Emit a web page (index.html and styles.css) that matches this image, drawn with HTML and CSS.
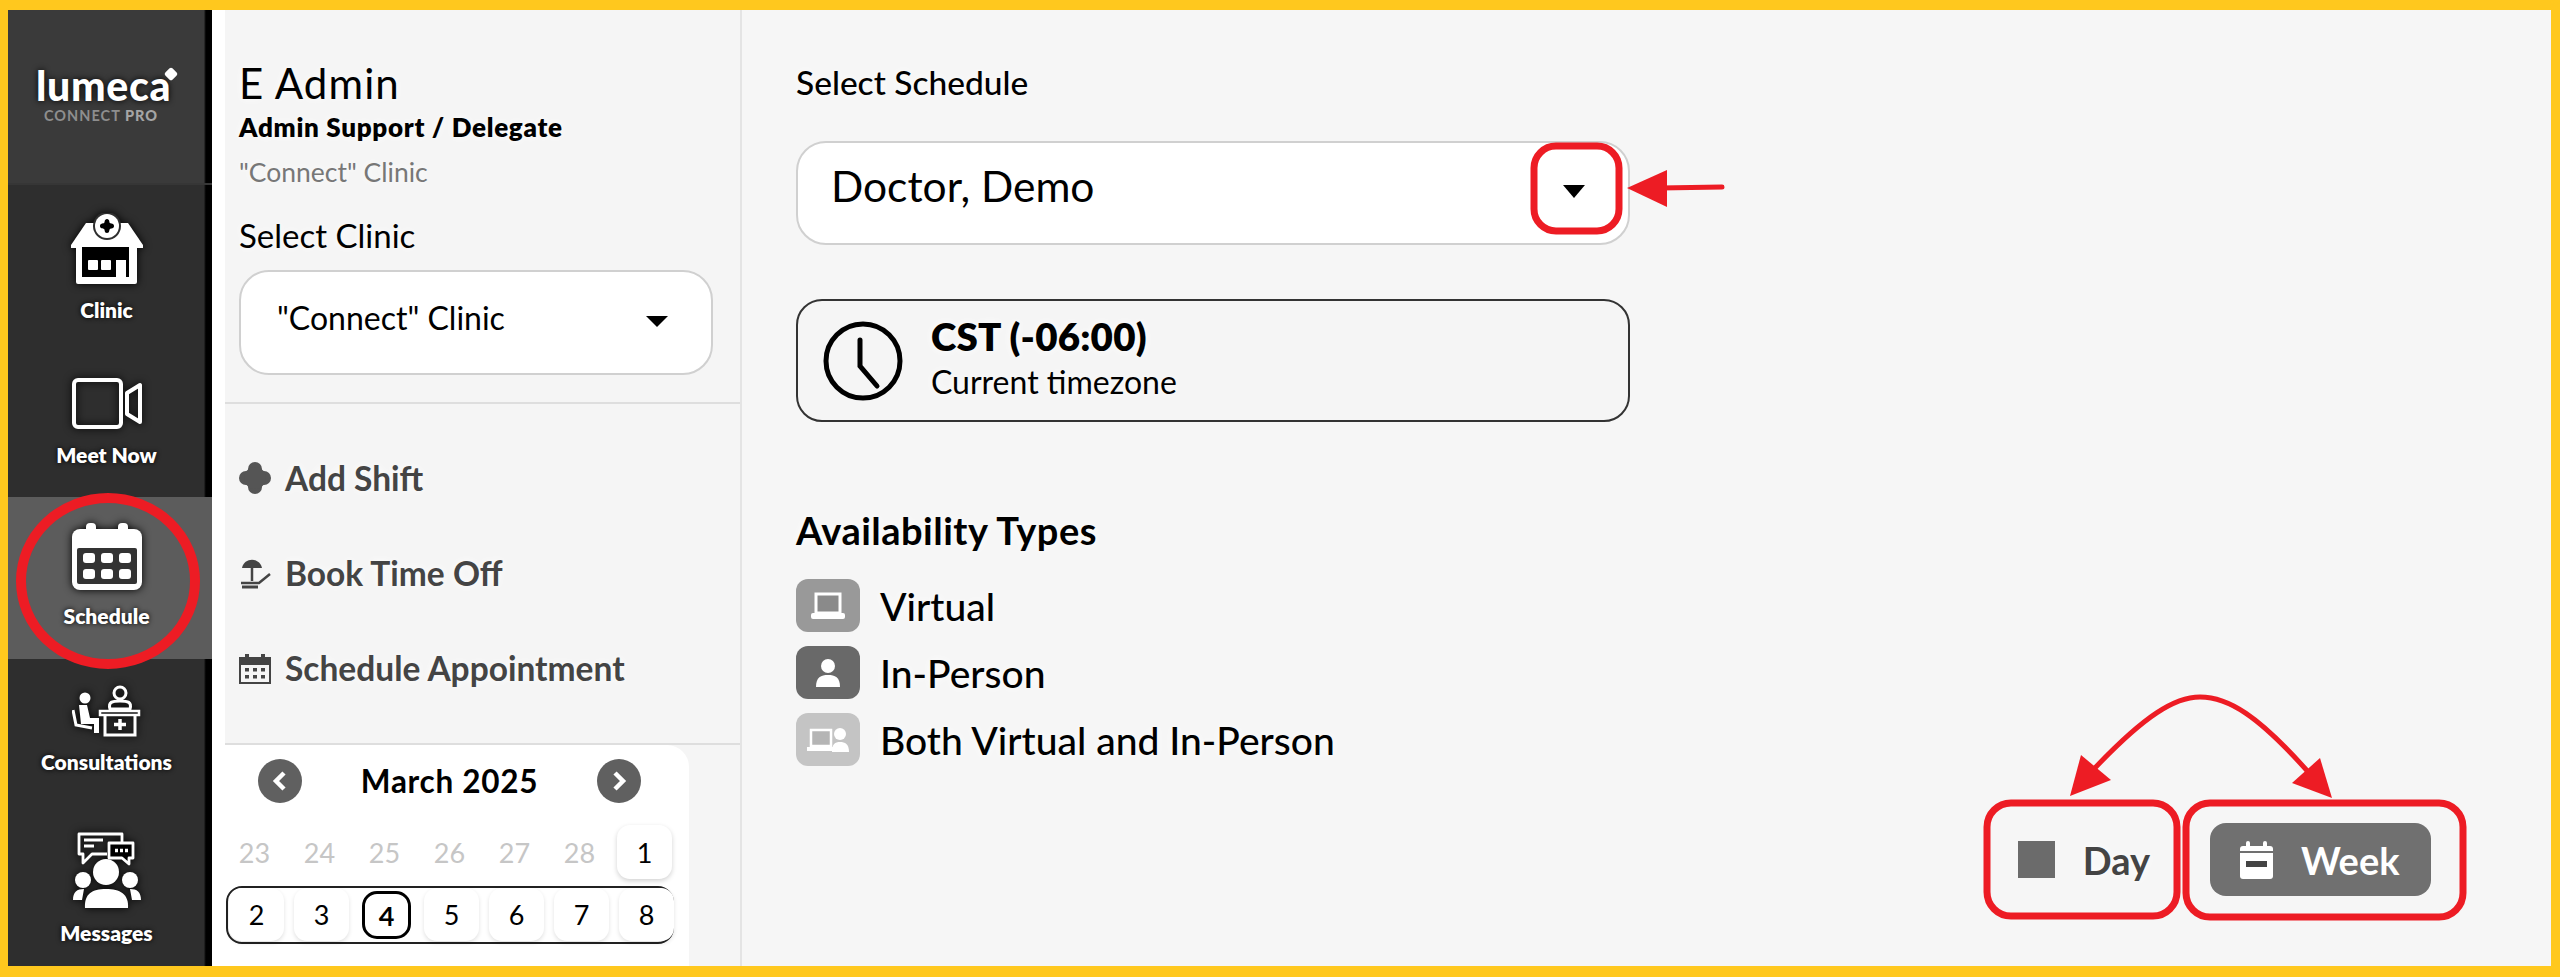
FILE: index.html
```html
<!DOCTYPE html>
<html lang="en">
<head>
<meta charset="UTF-8">
<meta name="viewport" content="width=device-width, initial-scale=1.0">
<title>Lumeca Connect Pro - Schedule</title>
<link rel="stylesheet" href="styles.css">
</head>
<body>

<div class="page">
    <div class="frame">

        <!-- Main navigation -->
        <aside class="sidebar">
            <div class="logo">
                <div class="logo-name">lumeca<span class="logo-star"></span></div>
                <div class="logo-sub">CONNECT <b>PRO</b></div>
            </div>
            <nav class="nav">
                <a class="nav-item nav-clinic">
                    <svg class="nav-icon" width="72" height="71" viewBox="-1 0 72 71">
                        <path d="M-1 32 L14 10 L56 10 L71 32 L71 35 L-1 35 Z" fill="#fff"/>
                        <circle cx="35" cy="13" r="14" fill="#2e2e2e"/>
                        <circle cx="35" cy="13" r="12" fill="#fff"/>
                        <path d="M35 6 C38 6 37 10 38 10 C39 11 42 10 42 13 C42 16 39 15 38 16 C37 16 38 20 35 20 C32 20 33 16 32 16 C31 15 28 16 28 13 C28 10 31 11 32 10 C33 10 32 6 35 6 Z" fill="#000"/>
                        <rect x="4" y="33" width="61" height="38" rx="2" fill="#fff"/>
                        <rect x="10" y="34" width="47" height="30" fill="#000"/>
                        <rect x="16" y="47" width="10" height="10" rx="1" fill="#fff"/>
                        <rect x="29" y="47" width="10" height="10" rx="1" fill="#fff"/>
                        <rect x="44" y="47" width="10" height="17" fill="#fff"/>
                    </svg>
                    <span>Clinic</span>
                </a>
                <a class="nav-item nav-meet">
                    <svg class="nav-icon" width="70" height="51" viewBox="0 0 70 51">
                        <rect x="2" y="2" width="47" height="47" rx="4" fill="none" stroke="#fff" stroke-width="4"/>
                        <path d="M68 7 V44 L55 36 V15 Z" fill="none" stroke="#fff" stroke-width="4" stroke-linejoin="round"/>
                    </svg>
                    <span>Meet Now</span>
                </a>
                <a class="nav-item nav-schedule active">
                    <svg class="nav-icon" width="70" height="67" viewBox="0 0 70 67">
                        <rect x="0" y="6" width="70" height="61" rx="8" fill="#fff"/>
                        <rect x="14" y="0" width="10" height="14" rx="4" fill="#fff"/>
                        <rect x="46" y="0" width="10" height="14" rx="4" fill="#fff"/>
                        <rect x="5" y="25" width="60" height="36" rx="2" fill="#333"/>
                        <g fill="#fff">
                            <rect x="11" y="30" width="12" height="10" rx="3"/>
                            <rect x="29" y="30" width="12" height="10" rx="3"/>
                            <rect x="47" y="30" width="12" height="10" rx="3"/>
                            <rect x="11" y="46" width="12" height="10" rx="3"/>
                            <rect x="29" y="46" width="12" height="10" rx="3"/>
                            <rect x="47" y="46" width="12" height="10" rx="3"/>
                        </g>
                    </svg>
                    <span>Schedule</span>
                </a>
                <a class="nav-item nav-consult">
                    <svg class="nav-icon" width="70" height="52" viewBox="0 0 70 52">
                        <circle cx="13" cy="13" r="5.5" fill="#fff"/>
                        <path d="M7 20 H15 L18 33 H27 V48 H22 V39 H9 Z" fill="#fff"/>
                        <path d="M1 25 L4 40 L20 43" fill="none" stroke="#fff" stroke-width="3"/>
                        <circle cx="48" cy="8" r="6" fill="none" stroke="#fff" stroke-width="3"/>
                        <path d="M38 24 C36 17 40 16 48 16 C56 16 60 17 58 24 Z" fill="none" stroke="#fff" stroke-width="3"/>
                        <path d="M28 26 H67 V30 H28 Z" fill="none" stroke="#fff" stroke-width="2.5"/>
                        <path d="M33 30 V50 H63 V30" fill="none" stroke="#fff" stroke-width="3"/>
                        <path d="M48 34 V45 M42 39.5 H54" stroke="#fff" stroke-width="3.5"/>
                    </svg>
                    <span>Consultations</span>
                </a>
                <a class="nav-item nav-messages">
                    <svg class="nav-icon" width="70" height="76" viewBox="0 0 70 76">
                        <path d="M35 22 H20 L11 31 V22 H7 V2 H50 V10" fill="none" stroke="#fff" stroke-width="2.8" stroke-linejoin="round"/>
                        <path d="M12 8 H31 M12 14 H22" stroke="#fff" stroke-width="3"/>
                        <path d="M37 11 H61 V26 H57 V32 L50 26 H37 Z" fill="#000" stroke="#fff" stroke-width="2.8" stroke-linejoin="round"/>
                        <path d="M43 18.5 H56" stroke="#fff" stroke-width="3.5" stroke-dasharray="3 2"/>
                        <circle cx="34" cy="40" r="13" fill="#fff"/>
                        <circle cx="11" cy="48" r="8" fill="#fff"/>
                        <circle cx="58" cy="48" r="8" fill="#fff"/>
                        <path d="M13 76 C12 62 20 57 34 57 C48 57 57 62 56 76 Z" fill="#fff"/>
                        <path d="M1 68 C1 60 5 57 12 57 L10 68 Z M69 68 C69 60 65 57 58 57 L60 68 Z" fill="#fff"/>
                    </svg>
                    <span>Messages</span>
                </a>
            </nav>
        </aside>

        <!-- Clinic panel -->
        <section class="panel">
            <div class="panel-user">
                <h1 class="user-name">E Admin</h1>
                <div class="user-role">Admin Support / Delegate</div>
                <div class="user-clinic">"Connect" Clinic</div>
                <div class="clinic-label">Select Clinic</div>
                <div class="select select-clinic">
                    <span>"Connect" Clinic</span>
                    <span class="caret"></span>
                </div>
            </div>

            <div class="panel-actions">
                <a class="action">
                    <svg width="32" height="32" viewBox="0 0 32 32" fill="#555">
                        <rect x="9" y="0" width="14" height="32" rx="7"/>
                        <rect x="0" y="9" width="32" height="14" rx="7"/>
                        <circle cx="16" cy="16" r="11"/>
                    </svg>
                    <span>Add Shift</span>
                </a>
                <a class="action">
                    <svg width="32" height="32" viewBox="0 0 32 32" fill="none" stroke="#444">
                        <path d="M3 11 C5 0 21 0 23 11 Z" fill="#444" stroke="none"/>
                        <path d="M13 8 V24" stroke-width="2.5"/>
                        <path d="M2 26 H20 L31 17" stroke-width="2.5"/>
                        <path d="M3 30 H19" stroke-width="3"/>
                    </svg>
                    <span>Book Time Off</span>
                </a>
                <a class="action">
                    <svg width="32" height="31" viewBox="0 0 32 31">
                        <path d="M1 5 H31 V30 H1 Z" fill="#f5f5f5" stroke="#444" stroke-width="2"/>
                        <rect x="1" y="4" width="30" height="8" fill="#444"/>
                        <rect x="6" y="1" width="4" height="6" fill="#444"/>
                        <rect x="22" y="1" width="4" height="6" fill="#444"/>
                        <g fill="#444">
                            <rect x="6" y="15" width="4" height="3.5"/>
                            <rect x="14" y="15" width="4" height="3.5"/>
                            <rect x="22" y="15" width="4" height="3.5"/>
                            <rect x="6" y="22" width="4" height="3.5"/>
                            <rect x="14" y="22" width="4" height="3.5"/>
                            <rect x="22" y="22" width="4" height="3.5"/>
                        </g>
                    </svg>
                    <span>Schedule Appointment</span>
                </a>
            </div>

            <!-- Month calendar -->
            <div class="calendar">
                <div class="cal-head">
                    <span class="cal-btn">
                        <svg width="16" height="22" viewBox="0 0 16 22"><path d="M12 3 L4 11 L12 19" fill="none" stroke="#fff" stroke-width="4.5"/></svg>
                    </span>
                    <span class="cal-title">March 2025</span>
                    <span class="cal-btn">
                        <svg width="16" height="22" viewBox="0 0 16 22"><path d="M4 3 L12 11 L4 19" fill="none" stroke="#fff" stroke-width="4.5"/></svg>
                    </span>
                </div>
                <div class="cal-row">
                    <span class="day muted">23</span>
                    <span class="day muted">24</span>
                    <span class="day muted">25</span>
                    <span class="day muted">26</span>
                    <span class="day muted">27</span>
                    <span class="day muted">28</span>
                    <span class="day raised">1</span>
                </div>
                <div class="cal-row cal-week">
                    <span class="day raised">2</span>
                    <span class="day raised">3</span>
                    <span class="day today">4</span>
                    <span class="day raised">5</span>
                    <span class="day raised">6</span>
                    <span class="day raised">7</span>
                    <span class="day raised">8</span>
                </div>
            </div>
        </section>

        <!-- Schedule settings -->
        <main class="main">
            <div class="schedule-label">Select Schedule</div>
            <div class="select select-schedule">
                <span>Doctor, Demo</span>
                <span class="caret"></span>
            </div>

            <div class="timezone">
                <svg width="80" height="80" viewBox="0 0 80 80" fill="none" stroke="#000" stroke-width="5">
                    <circle cx="40" cy="40" r="37"/>
                    <path d="M37 19 V45 L54 65" stroke-linecap="round"/>
                </svg>
                <div>
                    <div class="tz-name">CST (-06:00)</div>
                    <div class="tz-sub">Current timezone</div>
                </div>
            </div>

            <h2 class="types-title">Availability Types</h2>
            <ul class="types">
                <li class="type">
                    <span class="type-icon type-virtual">
                        <svg width="36" height="28" viewBox="0 0 36 28">
                            <rect x="6" y="2" width="24" height="19" fill="#8a8a8a" stroke="#fff" stroke-width="3"/>
                            <rect x="1" y="21" width="34" height="6" rx="2" fill="#fff"/>
                        </svg>
                    </span>
                    Virtual
                </li>
                <li class="type">
                    <span class="type-icon type-person">
                        <svg width="26" height="30" viewBox="0 0 26 30" fill="#fff">
                            <circle cx="13" cy="8" r="7"/>
                            <path d="M1 29 C1 19 6 17 13 17 C20 17 25 19 25 29 Z"/>
                        </svg>
                    </span>
                    In-Person
                </li>
                <li class="type">
                    <span class="type-icon type-both">
                        <svg width="42" height="28" viewBox="0 0 42 28" fill="#fff">
                            <rect x="4" y="4" width="20" height="16" fill="#b5b5b5" stroke="#fff" stroke-width="2.5"/>
                            <rect x="0" y="21" width="27" height="4"/>
                            <circle cx="33" cy="8" r="6"/>
                            <path d="M25 26 C25 18 28 16 33 16 C38 16 42 18 42 26 Z"/>
                        </svg>
                    </span>
                    Both Virtual and In-Person
                </li>
            </ul>

            <div class="view-toggle">
                <a class="view-btn">
                    <span class="view-square"></span>
                    Day
                </a>
                <a class="view-btn view-active">
                    <svg width="33" height="38" viewBox="0 0 33 38">
                        <path d="M3 5 H30 A3 3 0 0 1 33 8 V35 A3 3 0 0 1 30 38 H3 A3 3 0 0 1 0 35 V8 A3 3 0 0 1 3 5 Z" fill="#fff"/>
                        <rect x="6" y="0" width="4" height="8" rx="2" fill="#fff"/>
                        <rect x="23" y="0" width="4" height="8" rx="2" fill="#fff"/>
                        <rect x="0" y="10" width="33" height="2" fill="#707070"/>
                        <rect x="6" y="20" width="21" height="6" fill="#444"/>
                    </svg>
                    Week
                </a>
            </div>
        </main>
    </div>

    <!-- Red annotations drawn over the screenshot -->
    <svg class="marks" width="2560" height="977" viewBox="0 0 2560 977" fill="none" stroke="#ed1c24">
        <ellipse cx="108" cy="581" rx="87" ry="83" stroke-width="10"/>
        <rect x="1534" y="146" width="85" height="85" rx="22" stroke-width="7"/>
        <path d="M1660 188 L1722 187" stroke-width="5" stroke-linecap="round"/>
        <path d="M1627 188 L1667 170 L1667 207 Z" fill="#ed1c24" stroke="none"/>
        <rect x="1987" y="803" width="190" height="113" rx="24" stroke-width="7"/>
        <rect x="2186" y="803" width="277" height="114" rx="24" stroke-width="7"/>
        <path d="M2093 770 C2145 715 2175 697 2200 697 C2228 697 2258 715 2310 774" stroke-width="5"/>
        <path d="M2070 796 L2081 755 L2111 780 Z" fill="#ed1c24" stroke="none"/>
        <path d="M2332 798 L2320 758 L2292 783 Z" fill="#ed1c24" stroke="none"/>
    </svg>
</div>

</body>
</html>
```

FILE: styles.css
```css
* {
    box-sizing: border-box;
}

body {
    margin: 0;
    padding: 0;
    font-family: "Lato", "Noto Sans", sans-serif;
    color: #000;
    background-color: #f6f6f6;
}

.page {
    position: relative;
    width: 2560px;
    height: 977px;
    overflow: hidden;
}

.frame {
    display: flex;
    height: 977px;
    border-style: solid;
    border-color: #ffc81e;
    border-width: 10px 9px 11px 8px;
    background-color: #f6f6f6;
}

.marks {
    position: absolute;
    left: 0;
    top: 0;
    pointer-events: none;
}

/* Sidebar */
.sidebar {
    width: 204px;
    flex-shrink: 0;
    background: linear-gradient(to right, #2e2e2e 96%, #000 97%);
    color: #fff;
    display: flex;
    flex-direction: column;
}

.logo {
    height: 175px;
    padding: 56px 0 0 28px;
    background: linear-gradient(to right, #3a3a3a 96%, #000 97%);
    border-bottom: 2px solid #363636;
}

.logo-name {
    font-size: 41px;
    line-height: 40px;
    font-weight: 900;
    letter-spacing: 0.7px;
    text-shadow: 0 0 6px #000;
    position: relative;
    width: 140px;
}

.logo-star {
    position: absolute;
    right: 0;
    top: 3px;
    width: 10px;
    height: 10px;
    background-color: #fff;
    transform: rotate(45deg);
    border-radius: 2px;
}

.logo-sub {
    margin: 1px 0 0 8px;
    font-size: 14.5px;
    line-height: 18px;
    letter-spacing: 1px;
    font-weight: 700;
    color: #8e8e8e;
    white-space: nowrap;
}

.logo-sub b {
    color: #a5a5a5;
    font-weight: 900;
}

.nav {
    display: flex;
    flex-direction: column;
}

.nav-item {
    display: flex;
    flex-direction: column;
    align-items: center;
    width: 197px;
    font-size: 21px;
    line-height: 26px;
    font-weight: 800;
    text-shadow: 0 0 5px #000;
}

.nav-icon {
    flex-shrink: 0;
    filter: drop-shadow(0 0 4px #000);
}

.nav-item span {
    margin-top: 13px;
}

.nav-clinic {
    height: 160px;
    padding-top: 28px;
}

.nav-meet {
    height: 152px;
    padding-top: 33px;
}

.nav-schedule {
    height: 162px;
    padding-top: 26px;
}

.nav-consult {
    height: 141px;
    padding-top: 26px;
}

.nav-messages {
    height: 166px;
    padding-top: 32px;
}

.nav-item.active {
    width: 204px;
    padding-right: 7px;
    background-color: #5c5c5c;
}

.nav-consult span {
    margin-top: 12px;
}

.nav-messages span {
    margin-top: 12px;
}

/* Clinic panel */
.panel {
    width: 530px;
    flex-shrink: 0;
    border-right: 2px solid #e4e4e4;
    border-left: 13px solid #fff;
    background-color: #f5f5f5;
    display: flex;
    flex-direction: column;
}

.panel-user {
    height: 394px;
    padding: 50px 0 0 14px;
    border-bottom: 2px solid #dedede;
}

.user-name {
    margin: 0;
    font-size: 42px;
    line-height: 46px;
    font-weight: 400;
    letter-spacing: 1.1px;
    text-shadow: 0 0 8px #fff;
}

.user-role {
    margin-top: 6px;
    font-size: 26px;
    line-height: 30px;
    font-weight: 800;
    letter-spacing: 0.7px;
    white-space: nowrap;
    text-shadow: 0 0 8px #fff;
}

.user-clinic {
    margin-top: 15px;
    font-size: 26.5px;
    line-height: 30px;
    color: #777;
    text-shadow: 0 0 8px #fff;
}

.clinic-label {
    margin-top: 29px;
    font-size: 33px;
    line-height: 38px;
    text-shadow: 0 0 8px #fff;
}

.select {
    display: flex;
    align-items: flex-start;
    justify-content: space-between;
    background-color: #fff;
    border: 2px solid #d0d0d0;
    border-radius: 30px;
}

.caret {
    width: 0;
    height: 0;
    border-left: 11px solid transparent;
    border-right: 11px solid transparent;
    border-top: 11px solid #000;
}

.select-clinic {
    width: 474px;
    height: 105px;
    margin-top: 16px;
    padding: 26px 43px 0 36px;
    font-size: 32px;
    line-height: 40px;
}

.select-clinic .caret {
    margin-top: 18px;
}

.panel-actions {
    height: 341px;
    padding: 58px 0 0 14px;
    border-bottom: 2px solid #dedede;
    display: flex;
    flex-direction: column;
}

.action {
    display: flex;
    align-items: center;
    gap: 14px;
    height: 32px;
    margin-bottom: 63px;
    font-size: 33.5px;
    font-weight: 700;
    color: #444;
    text-shadow: 0 0 8px #fff;
}

.calendar {
    flex: 1;
    width: 464px;
    background-color: #fff;
    border-top-right-radius: 22px;
    padding: 12px 0 0 0;
}

.cal-head {
    display: flex;
    align-items: center;
    padding-left: 33px;
    height: 48px;
}

.cal-btn {
    width: 44px;
    height: 44px;
    border-radius: 50%;
    background-color: #606060;
    display: flex;
    align-items: center;
    justify-content: center;
    flex-shrink: 0;
}

.cal-title {
    width: 295px;
    text-align: center;
    font-size: 31.5px;
    font-weight: 700;
    letter-spacing: 0.7px;
}

.cal-row {
    display: grid;
    grid-template-columns: repeat(7, 55px);
    column-gap: 10px;
    padding-left: 2px;
    margin-top: 20px;
    height: 54px;
}

.day {
    display: flex;
    align-items: center;
    justify-content: center;
    height: 54px;
    font-size: 27px;
    border-radius: 13px;
}

.day.muted {
    color: #c6c6c6;
}

.day.raised {
    background-color: #fff;
    box-shadow: 0 2px 5px rgba(0, 0, 0, 0.18);
}

.day.today {
    width: 49px;
    height: 48px;
    margin: 3px 0 0 3px;
    font-weight: 700;
    border: 3px solid #000;
    border-radius: 15px;
}

.cal-week {
    width: 448px;
    height: 58px;
    margin-top: 7px;
    margin-left: 1px;
    padding-left: 1px;
    border: 2px solid #222;
    border-radius: 16px;
}

.cal-week .day.raised {
    height: 53px;
    box-shadow: 0 2px 4px rgba(0, 0, 0, 0.12);
}

/* Main column */
.main {
    flex: 1;
    display: flex;
    flex-direction: column;
    padding: 53px 120px 70px 54px;
}

.schedule-label {
    font-size: 33.5px;
    line-height: 38px;
    font-weight: 500;
    white-space: nowrap;
    text-shadow: 0 0 8px #fff;
}

.select-schedule {
    width: 834px;
    height: 104px;
    margin-top: 40px;
    padding: 18px 43px 0 33px;
    font-size: 42.5px;
    line-height: 50px;
}

.select-schedule .caret {
    margin-top: 24px;
    border-top-width: 13px;
}

.timezone {
    display: flex;
    align-items: center;
    gap: 28px;
    width: 834px;
    height: 123px;
    margin-top: 54px;
    padding-left: 25px;
    border: 2px solid #333;
    border-radius: 26px;
    background-color: #f5f5f5;
}

.tz-name {
    margin-top: -8px;
    font-size: 38.5px;
    line-height: 44px;
    font-weight: 800;
    letter-spacing: 0.2px;
    text-shadow: 0 0 8px #fff;
}

.tz-sub {
    margin-top: 6px;
    font-size: 32px;
    line-height: 36px;
    text-shadow: 0 0 8px #fff;
}

.types-title {
    margin: 86px 0 0 0;
    font-size: 38px;
    line-height: 44px;
    font-weight: 700;
    letter-spacing: 0.5px;
    white-space: nowrap;
    text-shadow: 0 0 8px #fff;
}

.types {
    list-style: none;
    margin: 27px 0 0 0;
    padding: 0;
}

.type {
    display: flex;
    align-items: center;
    gap: 20px;
    height: 53px;
    margin-bottom: 14px;
    font-size: 39px;
    font-weight: 500;
    white-space: nowrap;
    text-shadow: 0 0 8px #fff;
}

.type-icon {
    display: flex;
    align-items: center;
    justify-content: center;
    width: 64px;
    height: 53px;
    border-radius: 12px;
}

.type-virtual {
    background-color: #999;
}

.type-person {
    background-color: #696969;
}

.type-both {
    background-color: #c4c4c4;
}

.view-toggle {
    display: flex;
    align-items: center;
    margin-top: auto;
    align-self: flex-end;
}

.view-btn {
    display: flex;
    align-items: center;
    font-size: 38px;
    font-weight: 700;
    color: #444;
    text-shadow: 0 0 8px #fff;
}

.view-square {
    width: 37px;
    height: 37px;
    margin-right: 28px;
    background-color: #6b6b6b;
}

.view-active {
    width: 221px;
    height: 73px;
    margin-left: 60px;
    padding-left: 30px;
    gap: 28px;
    color: #fff;
    text-shadow: none;
    background-color: #707070;
    border-radius: 16px;
}
```
